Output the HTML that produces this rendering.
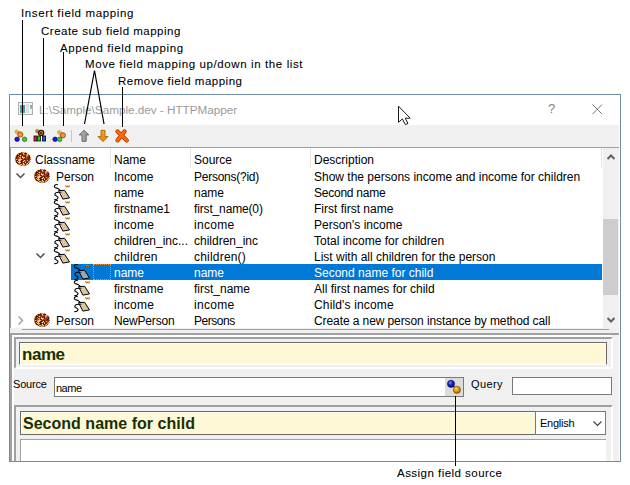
<!DOCTYPE html>
<html><head><meta charset="utf-8">
<style>
*{margin:0;padding:0;box-sizing:border-box}
html,body{width:630px;height:485px;overflow:hidden;background:#fff;font-family:"Liberation Sans",sans-serif;font-size:12px;color:#000;position:relative}
.a{position:absolute;white-space:nowrap}
.ann{position:absolute;white-space:nowrap;font-size:11.5px;line-height:14px;color:#000;letter-spacing:0.5px;-webkit-text-stroke:0.08px #000}
.t{position:absolute;white-space:nowrap;font-size:12px;line-height:16px}
.s{position:absolute;white-space:nowrap;font-size:11px;line-height:14px;letter-spacing:-0.5px}
.sep{position:absolute;top:148px;width:1px;height:20px;background:#e5e5e5}
svg{position:absolute;overflow:visible}
</style></head><body>
<svg width="0" height="0" style="left:0;top:0">
<defs>
  <pattern id="ck" width="4" height="4" patternUnits="userSpaceOnUse">
    <rect width="4" height="4" fill="#d08840"/>
    <rect x="0" y="0" width="2" height="2" fill="#7a2808"/>
    <rect x="2" y="2" width="1" height="1" fill="#f8d890"/>
    <rect x="3" y="0" width="1" height="1" fill="#b05818"/>
    <rect x="1" y="3" width="1" height="1" fill="#f0c070"/>
  </pattern>
  <clipPath id="ckc"><ellipse cx="8" cy="7" rx="7.9" ry="6.9"/></clipPath>
  <g id="cookie" clip-path="url(#ckc)"><rect x="4" y="0" width="1" height="1" fill="#d08030"/><rect x="5" y="0" width="1" height="1" fill="#eab060"/><rect x="6" y="0" width="1" height="1" fill="#581000"/><rect x="7" y="0" width="1" height="1" fill="#d08030"/><rect x="8" y="0" width="1" height="1" fill="#d08030"/><rect x="9" y="0" width="1" height="1" fill="#eab060"/><rect x="10" y="0" width="1" height="1" fill="#8a2c08"/><rect x="11" y="0" width="1" height="1" fill="#d08030"/><rect x="2" y="1" width="1" height="1" fill="#eab060"/><rect x="3" y="1" width="1" height="1" fill="#983a0c"/><rect x="4" y="1" width="1" height="1" fill="#701804"/><rect x="5" y="1" width="1" height="1" fill="#8a2c08"/><rect x="6" y="1" width="1" height="1" fill="#701804"/><rect x="7" y="1" width="1" height="1" fill="#983a0c"/><rect x="8" y="1" width="1" height="1" fill="#fbe0a8"/><rect x="9" y="1" width="1" height="1" fill="#701804"/><rect x="10" y="1" width="1" height="1" fill="#581000"/><rect x="11" y="1" width="1" height="1" fill="#581000"/><rect x="12" y="1" width="1" height="1" fill="#fbe0a8"/><rect x="13" y="1" width="1" height="1" fill="#eab060"/><rect x="1" y="2" width="1" height="1" fill="#701804"/><rect x="2" y="2" width="1" height="1" fill="#701804"/><rect x="3" y="2" width="1" height="1" fill="#d08030"/><rect x="4" y="2" width="1" height="1" fill="#701804"/><rect x="5" y="2" width="1" height="1" fill="#8a2c08"/><rect x="6" y="2" width="1" height="1" fill="#8a2c08"/><rect x="7" y="2" width="1" height="1" fill="#701804"/><rect x="8" y="2" width="1" height="1" fill="#d08030"/><rect x="9" y="2" width="1" height="1" fill="#d08030"/><rect x="10" y="2" width="1" height="1" fill="#983a0c"/><rect x="11" y="2" width="1" height="1" fill="#d08030"/><rect x="12" y="2" width="1" height="1" fill="#eab060"/><rect x="13" y="2" width="1" height="1" fill="#d08030"/><rect x="14" y="2" width="1" height="1" fill="#fbe0a8"/><rect x="0" y="3" width="1" height="1" fill="#d08030"/><rect x="1" y="3" width="1" height="1" fill="#8a2c08"/><rect x="2" y="3" width="1" height="1" fill="#581000"/><rect x="3" y="3" width="1" height="1" fill="#581000"/><rect x="4" y="3" width="1" height="1" fill="#983a0c"/><rect x="5" y="3" width="1" height="1" fill="#fbe0a8"/><rect x="6" y="3" width="1" height="1" fill="#b05014"/><rect x="7" y="3" width="1" height="1" fill="#8a2c08"/><rect x="8" y="3" width="1" height="1" fill="#8a2c08"/><rect x="9" y="3" width="1" height="1" fill="#701804"/><rect x="10" y="3" width="1" height="1" fill="#983a0c"/><rect x="11" y="3" width="1" height="1" fill="#b05014"/><rect x="12" y="3" width="1" height="1" fill="#983a0c"/><rect x="13" y="3" width="1" height="1" fill="#b05014"/><rect x="14" y="3" width="1" height="1" fill="#581000"/><rect x="15" y="3" width="1" height="1" fill="#983a0c"/><rect x="0" y="4" width="1" height="1" fill="#701804"/><rect x="1" y="4" width="1" height="1" fill="#8a2c08"/><rect x="2" y="4" width="1" height="1" fill="#581000"/><rect x="3" y="4" width="1" height="1" fill="#d08030"/><rect x="4" y="4" width="1" height="1" fill="#581000"/><rect x="5" y="4" width="1" height="1" fill="#b05014"/><rect x="6" y="4" width="1" height="1" fill="#701804"/><rect x="7" y="4" width="1" height="1" fill="#eab060"/><rect x="8" y="4" width="1" height="1" fill="#983a0c"/><rect x="9" y="4" width="1" height="1" fill="#8a2c08"/><rect x="10" y="4" width="1" height="1" fill="#701804"/><rect x="11" y="4" width="1" height="1" fill="#b05014"/><rect x="12" y="4" width="1" height="1" fill="#581000"/><rect x="13" y="4" width="1" height="1" fill="#983a0c"/><rect x="14" y="4" width="1" height="1" fill="#701804"/><rect x="15" y="4" width="1" height="1" fill="#8a2c08"/><rect x="0" y="5" width="1" height="1" fill="#701804"/><rect x="1" y="5" width="1" height="1" fill="#701804"/><rect x="2" y="5" width="1" height="1" fill="#983a0c"/><rect x="3" y="5" width="1" height="1" fill="#8a2c08"/><rect x="4" y="5" width="1" height="1" fill="#eab060"/><rect x="5" y="5" width="1" height="1" fill="#d08030"/><rect x="6" y="5" width="1" height="1" fill="#8a2c08"/><rect x="7" y="5" width="1" height="1" fill="#ffffff"/><rect x="8" y="5" width="1" height="1" fill="#701804"/><rect x="9" y="5" width="1" height="1" fill="#eab060"/><rect x="10" y="5" width="1" height="1" fill="#701804"/><rect x="11" y="5" width="1" height="1" fill="#b05014"/><rect x="12" y="5" width="1" height="1" fill="#8a2c08"/><rect x="13" y="5" width="1" height="1" fill="#8a2c08"/><rect x="14" y="5" width="1" height="1" fill="#581000"/><rect x="15" y="5" width="1" height="1" fill="#983a0c"/><rect x="0" y="6" width="1" height="1" fill="#8a2c08"/><rect x="1" y="6" width="1" height="1" fill="#581000"/><rect x="2" y="6" width="1" height="1" fill="#8a2c08"/><rect x="3" y="6" width="1" height="1" fill="#b05014"/><rect x="4" y="6" width="1" height="1" fill="#983a0c"/><rect x="5" y="6" width="1" height="1" fill="#eab060"/><rect x="6" y="6" width="1" height="1" fill="#701804"/><rect x="7" y="6" width="1" height="1" fill="#581000"/><rect x="8" y="6" width="1" height="1" fill="#8a2c08"/><rect x="9" y="6" width="1" height="1" fill="#8a2c08"/><rect x="10" y="6" width="1" height="1" fill="#983a0c"/><rect x="11" y="6" width="1" height="1" fill="#b05014"/><rect x="12" y="6" width="1" height="1" fill="#8a2c08"/><rect x="13" y="6" width="1" height="1" fill="#701804"/><rect x="14" y="6" width="1" height="1" fill="#701804"/><rect x="15" y="6" width="1" height="1" fill="#eab060"/><rect x="0" y="7" width="1" height="1" fill="#8a2c08"/><rect x="1" y="7" width="1" height="1" fill="#eab060"/><rect x="2" y="7" width="1" height="1" fill="#b05014"/><rect x="3" y="7" width="1" height="1" fill="#d08030"/><rect x="4" y="7" width="1" height="1" fill="#581000"/><rect x="5" y="7" width="1" height="1" fill="#d08030"/><rect x="6" y="7" width="1" height="1" fill="#eab060"/><rect x="7" y="7" width="1" height="1" fill="#983a0c"/><rect x="8" y="7" width="1" height="1" fill="#8a2c08"/><rect x="9" y="7" width="1" height="1" fill="#701804"/><rect x="10" y="7" width="1" height="1" fill="#581000"/><rect x="11" y="7" width="1" height="1" fill="#983a0c"/><rect x="12" y="7" width="1" height="1" fill="#8a2c08"/><rect x="13" y="7" width="1" height="1" fill="#8a2c08"/><rect x="14" y="7" width="1" height="1" fill="#983a0c"/><rect x="15" y="7" width="1" height="1" fill="#581000"/><rect x="0" y="8" width="1" height="1" fill="#8a2c08"/><rect x="1" y="8" width="1" height="1" fill="#581000"/><rect x="2" y="8" width="1" height="1" fill="#581000"/><rect x="3" y="8" width="1" height="1" fill="#eab060"/><rect x="4" y="8" width="1" height="1" fill="#b05014"/><rect x="5" y="8" width="1" height="1" fill="#701804"/><rect x="6" y="8" width="1" height="1" fill="#701804"/><rect x="7" y="8" width="1" height="1" fill="#581000"/><rect x="8" y="8" width="1" height="1" fill="#8a2c08"/><rect x="9" y="8" width="1" height="1" fill="#fbe0a8"/><rect x="10" y="8" width="1" height="1" fill="#8a2c08"/><rect x="11" y="8" width="1" height="1" fill="#983a0c"/><rect x="12" y="8" width="1" height="1" fill="#eab060"/><rect x="13" y="8" width="1" height="1" fill="#8a2c08"/><rect x="14" y="8" width="1" height="1" fill="#8a2c08"/><rect x="15" y="8" width="1" height="1" fill="#ffffff"/><rect x="0" y="9" width="1" height="1" fill="#701804"/><rect x="1" y="9" width="1" height="1" fill="#8a2c08"/><rect x="2" y="9" width="1" height="1" fill="#eab060"/><rect x="3" y="9" width="1" height="1" fill="#983a0c"/><rect x="4" y="9" width="1" height="1" fill="#eab060"/><rect x="5" y="9" width="1" height="1" fill="#8a2c08"/><rect x="6" y="9" width="1" height="1" fill="#581000"/><rect x="7" y="9" width="1" height="1" fill="#8a2c08"/><rect x="8" y="9" width="1" height="1" fill="#701804"/><rect x="9" y="9" width="1" height="1" fill="#8a2c08"/><rect x="10" y="9" width="1" height="1" fill="#d08030"/><rect x="11" y="9" width="1" height="1" fill="#701804"/><rect x="12" y="9" width="1" height="1" fill="#8a2c08"/><rect x="13" y="9" width="1" height="1" fill="#b05014"/><rect x="14" y="9" width="1" height="1" fill="#eab060"/><rect x="15" y="9" width="1" height="1" fill="#701804"/><rect x="0" y="10" width="1" height="1" fill="#b05014"/><rect x="1" y="10" width="1" height="1" fill="#581000"/><rect x="2" y="10" width="1" height="1" fill="#581000"/><rect x="3" y="10" width="1" height="1" fill="#fbe0a8"/><rect x="4" y="10" width="1" height="1" fill="#fbe0a8"/><rect x="5" y="10" width="1" height="1" fill="#eab060"/><rect x="6" y="10" width="1" height="1" fill="#701804"/><rect x="7" y="10" width="1" height="1" fill="#701804"/><rect x="8" y="10" width="1" height="1" fill="#701804"/><rect x="9" y="10" width="1" height="1" fill="#581000"/><rect x="10" y="10" width="1" height="1" fill="#fbe0a8"/><rect x="11" y="10" width="1" height="1" fill="#581000"/><rect x="12" y="10" width="1" height="1" fill="#701804"/><rect x="13" y="10" width="1" height="1" fill="#eab060"/><rect x="14" y="10" width="1" height="1" fill="#d08030"/><rect x="15" y="10" width="1" height="1" fill="#ffffff"/><rect x="1" y="11" width="1" height="1" fill="#b05014"/><rect x="2" y="11" width="1" height="1" fill="#581000"/><rect x="3" y="11" width="1" height="1" fill="#701804"/><rect x="4" y="11" width="1" height="1" fill="#d08030"/><rect x="5" y="11" width="1" height="1" fill="#983a0c"/><rect x="6" y="11" width="1" height="1" fill="#581000"/><rect x="7" y="11" width="1" height="1" fill="#983a0c"/><rect x="8" y="11" width="1" height="1" fill="#fbe0a8"/><rect x="9" y="11" width="1" height="1" fill="#983a0c"/><rect x="10" y="11" width="1" height="1" fill="#581000"/><rect x="11" y="11" width="1" height="1" fill="#b05014"/><rect x="12" y="11" width="1" height="1" fill="#fbe0a8"/><rect x="13" y="11" width="1" height="1" fill="#581000"/><rect x="14" y="11" width="1" height="1" fill="#983a0c"/><rect x="2" y="12" width="1" height="1" fill="#b05014"/><rect x="3" y="12" width="1" height="1" fill="#983a0c"/><rect x="4" y="12" width="1" height="1" fill="#983a0c"/><rect x="5" y="12" width="1" height="1" fill="#eab060"/><rect x="6" y="12" width="1" height="1" fill="#eab060"/><rect x="7" y="12" width="1" height="1" fill="#b05014"/><rect x="8" y="12" width="1" height="1" fill="#eab060"/><rect x="9" y="12" width="1" height="1" fill="#eab060"/><rect x="10" y="12" width="1" height="1" fill="#701804"/><rect x="11" y="12" width="1" height="1" fill="#eab060"/><rect x="12" y="12" width="1" height="1" fill="#581000"/><rect x="13" y="12" width="1" height="1" fill="#581000"/><rect x="4" y="13" width="1" height="1" fill="#ffffff"/><rect x="5" y="13" width="1" height="1" fill="#b05014"/><rect x="6" y="13" width="1" height="1" fill="#983a0c"/><rect x="7" y="13" width="1" height="1" fill="#eab060"/><rect x="8" y="13" width="1" height="1" fill="#d08030"/><rect x="9" y="13" width="1" height="1" fill="#983a0c"/><rect x="10" y="13" width="1" height="1" fill="#701804"/><rect x="11" y="13" width="1" height="1" fill="#983a0c"/><circle cx="5" cy="8" r="1" fill="#fff"/><circle cx="8.5" cy="6" r="0.7" fill="#fff"/><circle cx="8.5" cy="9.5" r="0.7" fill="#fff"/><circle cx="12" cy="4" r="0.7" fill="#fff"/></g>
  <g id="tag">
    <path d="M4.8 0.8C2.8 0.1 1 1.2 1.4 2.8C1.8 4.2 4.2 4 5.2 4.6L8.2 7.2" stroke="#000" stroke-width="1.1" fill="none"/>
    <path d="M8 8.4C5 8 2 8.4 1.8 10.3C1.7 12 5 11.8 5 13.5C5 15 3 15.6 1.2 15.8" stroke="#000" stroke-width="1.1" fill="none"/>
    <path d="M5.5 6.6L11.6 6.3L16.5 13.9L9.9 15.1Z" fill="#dcc49c" stroke="#000" stroke-width="1"/>
    <circle cx="7.8" cy="8.2" r="0.8" fill="#333"/>
    <path d="M12.6 1.6L13.6 3.2L14.6 2.2L15.6 3.2L16.4 1.6" stroke="#222" stroke-width="0.9" fill="none"/>
    <path d="M12.8 1.4L13.8 2.6L14.6 1.6L15.6 2.6L16.4 1.4" stroke="#ff8a00" stroke-width="1" fill="none"/>
  </g>
  <g id="tagsel">
    <path d="M4.8 0.8C2.8 0.1 1 1.2 1.4 2.8C1.8 4.2 4.2 4 5.2 4.6L8.2 7.2" stroke="#000" stroke-width="1.1" fill="none"/>
    <path d="M8 8.4C5 8 2 8.4 1.8 10.3C1.7 12 5 11.8 5 13.5C5 15 3 15.6 1.2 15.8" stroke="#000" stroke-width="1.1" fill="none"/>
    <path d="M5.5 6.6L11.6 6.3L16.5 13.9L9.9 15.1Z" fill="#9ca8b0" stroke="#000" stroke-width="1"/>
    <circle cx="7.8" cy="8.2" r="0.8" fill="#333"/>
    <path d="M12.6 1.6L13.6 3.2L14.6 2.2L15.6 3.2L16.4 1.6" stroke="#222" stroke-width="0.9" fill="none"/>
    <path d="M12.8 1.4L13.8 2.6L14.6 1.6L15.6 2.6L16.4 1.4" stroke="#ff8a00" stroke-width="1" fill="none"/>
  </g>
</defs>
</svg>

<!-- annotations -->
<div class="ann" style="left:21px;top:6px;letter-spacing:0.63px">Insert field mapping</div>
<div class="ann" style="left:41px;top:24px">Create sub field mapping</div>
<div class="ann" style="left:60px;top:41px;letter-spacing:0.63px">Append field mapping</div>
<div class="ann" style="left:85px;top:57px;letter-spacing:0.61px">Move field mapping up/down in the list</div>
<div class="ann" style="left:118px;top:74px;letter-spacing:0.5px">Remove field mapping</div>

<!-- window frame -->
<div class="a" style="left:9px;top:94px;width:612px;height:368px;border:1px solid #6f8ba6;background:#fff"></div>
<!-- title bar -->
<div class="a" style="left:10px;top:95px;width:610px;height:30px;background:#fff"></div>
<div class="a" style="left:18px;top:102px;width:15px;height:13px;border:1px solid #b0b0b0;background:#f4f4f4"></div>
<div class="a" style="left:20px;top:105px;width:5px;height:8px;background:linear-gradient(#5a8ab8,#48a870)"></div>
<div class="a" style="left:26px;top:104px;width:3px;height:9px;background:#e0e0e0"></div>
<div class="a" style="left:30px;top:105px;width:2px;height:4px;background:linear-gradient(#78a8d0,#90c890)"></div>
<div class="t" style="left:39px;top:102px;font-size:11.7px;color:#9a9a9a">L:\Sample\Sample.dev - HTTPMapper</div>
<div class="t" style="left:548px;top:101px;font-size:13px;color:#808080">?</div>
<svg style="left:590px;top:102px" width="14" height="14"><path d="M2.5 2.5L12 12M12 2.5L2.5 12" stroke="#777" stroke-width="1"/></svg>

<!-- toolbar -->
<div class="a" style="left:10px;top:125px;width:609px;height:22px;background:#f0f0f0"></div>
<div class="a" style="left:71px;top:130px;width:1px;height:12px;background:#c8c8c8"></div>
<svg style="left:0;top:0" width="630" height="485">
  <defs>
    <linearGradient id="gup" x1="0" y1="0" x2="1" y2="0"><stop offset="0" stop-color="#c8c8c8"/><stop offset="0.5" stop-color="#a0a0a0"/><stop offset="1" stop-color="#909090"/></linearGradient>
    <linearGradient id="gdn" x1="0" y1="0" x2="0" y2="1"><stop offset="0" stop-color="#f8a040"/><stop offset="1" stop-color="#e08a00"/></linearGradient>
  </defs>
  <!-- insert -->
  <line x1="16.6" y1="131.6" x2="20.2" y2="134.5" stroke="#e89838" stroke-width="4.2" stroke-linecap="round" opacity="0.8"/>
  <circle cx="20.3" cy="134.5" r="2.6" fill="#f09828" stroke="#8a4a10" stroke-width="0.8"/>
  <circle cx="17.1" cy="139.3" r="2.3" fill="#1a1ad8" stroke="#000070" stroke-width="0.6"/>
  <circle cx="24.6" cy="139.3" r="2.3" fill="#48c838" stroke="#105010" stroke-width="0.6"/>
  <!-- create sub -->
  <line x1="37.3" y1="131.2" x2="41" y2="133" stroke="#a86020" stroke-width="4" stroke-linecap="round" opacity="0.8"/>
  <circle cx="41.2" cy="132.9" r="2.6" fill="#d07818" stroke="#201000" stroke-width="1.1"/><path d="M39.5 131.5L42.5 134.5M40 134L42 132" stroke="#301000" stroke-width="0.7"/>
  <rect x="34" y="136" width="2.8" height="5" fill="#d02838" stroke="#200" stroke-width="0.8"/>
  <rect x="37.6" y="136" width="3" height="5" fill="#30b838" stroke="#020" stroke-width="0.8"/>
  <rect x="42.4" y="136" width="3.2" height="5" fill="#3858c8" stroke="#002" stroke-width="0.8"/>
  <!-- append -->
  <line x1="59.2" y1="132.3" x2="62.8" y2="135.2" stroke="#e89838" stroke-width="4.2" stroke-linecap="round" opacity="0.8"/>
  <circle cx="62.9" cy="135.3" r="2.6" fill="#f09828" stroke="#8a4a10" stroke-width="0.8"/>
  <circle cx="55.1" cy="139.3" r="2.3" fill="#1a1ad8" stroke="#000070" stroke-width="0.6"/>
  <circle cx="59.7" cy="139.3" r="2.3" fill="#48c838" stroke="#105010" stroke-width="0.6"/>
  <!-- up -->
  <path d="M84 130.3L88.8 134.9H86.2V141.3H82V134.9H79.2Z" fill="url(#gup)" stroke="#606060" stroke-width="0.9"/>
  <!-- down -->
  <path d="M101 130.4H105V136.6H108L103 141.6L98 136.6H101Z" fill="url(#gdn)" stroke="#a86000" stroke-width="0.9"/>
  <!-- remove -->
  <path d="M117.5 131.5L126.8 140.4M124.5 131.5L117.5 140.4" stroke="#a83000" stroke-width="4.2" stroke-linecap="round"/>
  <path d="M117.5 131.5L126.8 140.4M124.5 131.5L117.5 140.4" stroke="#ff6a00" stroke-width="2.8" stroke-linecap="round"/>
</svg>

<!-- list -->
<div class="a" style="left:10px;top:147px;width:609px;height:182px;background:#fff;border-top:1px solid #a0a0a0;border-left:1px solid #a0a0a0"></div>
<!-- scrollbar -->
<div class="a" style="left:603px;top:148px;width:16px;height:180px;background:#f0f0f0"></div>
<div class="a" style="left:603px;top:219px;width:15px;height:76px;background:#cdcdcd"></div>
<svg style="left:603px;top:150px" width="16" height="14"><path d="M4.5 9L8 5.5L11.5 9" stroke="#606060" stroke-width="2" fill="none"/></svg>
<svg style="left:603px;top:313px" width="16" height="14"><path d="M4.5 5L8 8.5L11.5 5" stroke="#606060" stroke-width="2" fill="none"/></svg>

<!-- header -->
<div class="sep" style="left:110px"></div>
<div class="sep" style="left:190px"></div>
<div class="sep" style="left:310px"></div>
<div class="sep" style="left:601px"></div>
<svg style="left:15px;top:151.5px" width="16" height="14"><use href="#cookie"/></svg>
<div class="t" style="left:35px;top:152px">Classname</div>
<div class="t" style="left:114px;top:152px">Name</div>
<div class="t" style="left:194px;top:152px">Source</div>
<div class="t" style="left:314px;top:152px">Description</div>

<!-- selected row -->
<div class="a" style="left:71px;top:264px;width:531px;height:16px;background:#0078d7"></div>
<div class="a" style="left:93px;top:264px;width:18px;height:16px;border:1px dotted #f89038"></div>

<!-- tree glyphs -->
<svg style="left:0;top:0" width="630" height="485">
  <path d="M16.5 173.5L20.5 177.5L24.5 173.5" stroke="#505050" stroke-width="1.5" fill="none"/>
  <path d="M36.5 253.5L40.5 257.5L44.5 253.5" stroke="#505050" stroke-width="1.5" fill="none"/>
  <path d="M18.5 316.5L22.5 320.5L18.5 324.5" stroke="#a0a0a0" stroke-width="1.5" fill="none"/>
</svg>
<svg style="left:34px;top:169px" width="16" height="14"><use href="#cookie"/></svg>
<svg style="left:34px;top:313px" width="16" height="14"><use href="#cookie"/></svg>
<svg style="left:53px;top:184px" width="17" height="16"><use href="#tag"/></svg>
<svg style="left:53px;top:200px" width="17" height="16"><use href="#tag"/></svg>
<svg style="left:53px;top:216px" width="17" height="16"><use href="#tag"/></svg>
<svg style="left:53px;top:232px" width="17" height="16"><use href="#tag"/></svg>
<svg style="left:53px;top:248px" width="17" height="16"><use href="#tag"/></svg>
<svg style="left:73px;top:264px" width="17" height="16"><use href="#tagsel"/></svg>
<svg style="left:73px;top:280px" width="17" height="16"><use href="#tag"/></svg>
<svg style="left:73px;top:296px" width="17" height="16"><use href="#tag"/></svg>

<!-- rows -->
<div class="t" style="left:56px;top:169px">Person</div>
<div class="t" style="left:114px;top:169px">Income</div>
<div class="t" style="left:194px;top:169px;letter-spacing:-0.25px">Persons(?id)</div>
<div class="t" style="left:314px;top:169px">Show the persons income and income for children</div>

<div class="t" style="left:114px;top:185px">name</div>
<div class="t" style="left:194px;top:185px">name</div>
<div class="t" style="left:314px;top:185px;letter-spacing:-0.24px">Second name</div>

<div class="t" style="left:114px;top:201px">firstname1</div>
<div class="t" style="left:194px;top:201px;letter-spacing:-0.15px">first_name(0)</div>
<div class="t" style="left:314px;top:201px">First first name</div>

<div class="t" style="left:114px;top:217px;letter-spacing:0.25px">income</div>
<div class="t" style="left:194px;top:217px;letter-spacing:0.3px">income</div>
<div class="t" style="left:314px;top:217px">Person's income</div>

<div class="t" style="left:114px;top:233px">children_inc...</div>
<div class="t" style="left:194px;top:233px">children_inc</div>
<div class="t" style="left:314px;top:233px">Total income for children</div>

<div class="t" style="left:114px;top:249px;letter-spacing:0.2px">children</div>
<div class="t" style="left:194px;top:249px;letter-spacing:0.2px">children()</div>
<div class="t" style="left:314px;top:249px">List with all children for the person</div>

<div class="t" style="left:114px;top:265px;color:#fff">name</div>
<div class="t" style="left:194px;top:265px;color:#fff">name</div>
<div class="t" style="left:314px;top:265px;color:#fff">Second name for child</div>

<div class="t" style="left:114px;top:281px">firstname</div>
<div class="t" style="left:194px;top:281px">first_name</div>
<div class="t" style="left:314px;top:281px">All first names for child</div>

<div class="t" style="left:114px;top:297px;letter-spacing:0.25px">income</div>
<div class="t" style="left:194px;top:297px;letter-spacing:0.3px">income</div>
<div class="t" style="left:314px;top:297px;letter-spacing:0.15px">Child's income</div>

<div class="t" style="left:56px;top:313px">Person</div>
<div class="t" style="left:114px;top:313px;letter-spacing:-0.17px">NewPerson</div>
<div class="t" style="left:194px;top:313px;letter-spacing:-0.45px">Persons</div>
<div class="t" style="left:314px;top:313px;letter-spacing:-0.09px">Create a new person instance by method call</div>

<!-- bottom area -->
<div class="a" style="left:10px;top:328px;width:609px;height:133px;background:#f0f0f0"></div>
<div class="a" style="left:22px;top:329px;width:587px;height:1px;background:#a0a0a0"></div>
<div class="a" style="left:10px;top:333px;width:609px;height:2px;background:#a0a0a0"></div>
<div class="a" style="left:10px;top:333px;width:2px;height:128px;background:#a0a0a0"></div>
<div class="a" style="left:12px;top:335px;width:600px;height:2px;background:#fff"></div>
<div class="a" style="left:12px;top:335px;width:2px;height:126px;background:#fff"></div>

<!-- panel1 -->
<div class="a" style="left:14px;top:337px;width:599px;height:32px;border-top:2px solid #a0a0a0;border-left:2px solid #a0a0a0;border-right:2px solid #fff;border-bottom:2px solid #fff"></div>
<div class="a" style="left:19px;top:342px;width:588px;height:23px;border:1px solid #6a6a6a;border-bottom-color:#fff;background:#fff8d7;box-shadow:inset 1px 1px 0 #fff"></div>
<div class="a" style="left:22px;top:343px;font-size:17px;font-weight:bold;line-height:24px;color:#183004;letter-spacing:-0.45px">name</div>

<!-- source row -->
<div class="s" style="left:13px;top:377px;letter-spacing:-0.2px">Source</div>
<div class="a" style="left:54px;top:377px;width:410px;height:20px;border:1px solid #7a7a7a;background:#fff"></div>
<div class="s" style="left:56px;top:381px">name</div>
<div class="a" style="left:445px;top:378px;width:18px;height:18px;background:#dcdcdc"></div>
<svg style="left:445px;top:378px" width="18" height="18">
  <line x1="6" y1="5.8" x2="12" y2="11.8" stroke="#222" stroke-width="1.2"/>
  <defs><radialGradient id="bb" cx="0.4" cy="0.35" r="0.6"><stop offset="0" stop-color="#8090f0"/><stop offset="0.5" stop-color="#1a22d8"/><stop offset="1" stop-color="#0a0a90"/></radialGradient>
  <radialGradient id="ob" cx="0.4" cy="0.35" r="0.6"><stop offset="0" stop-color="#ffd070"/><stop offset="0.5" stop-color="#f0a018"/><stop offset="1" stop-color="#b06800"/></radialGradient></defs>
  <circle cx="6" cy="5.8" r="3.6" fill="url(#bb)" stroke="#101050" stroke-width="0.6"/>
  <circle cx="11.9" cy="11.8" r="3.6" fill="url(#ob)" stroke="#604000" stroke-width="0.6"/>
</svg>
<div class="s" style="left:471px;top:377px;letter-spacing:0.4px">Query</div>
<div class="a" style="left:512px;top:377px;width:100px;height:18px;border:1px solid #7a7a7a;background:#fff"></div>

<!-- panel2 -->
<div class="a" style="left:14px;top:405px;width:599px;height:56px;border-top:2px solid #a0a0a0;border-left:2px solid #a0a0a0;border-right:2px solid #fff"></div>
<div class="a" style="left:20px;top:411px;width:516px;height:24px;border:1px solid #6a6a6a;background:#fff8d7;box-shadow:inset 1px 1px 0 #fff"></div>
<div class="a" style="left:23px;top:412px;font-size:16px;font-weight:bold;line-height:23px;color:#183004;letter-spacing:0.02px">Second name for child</div>
<div class="a" style="left:535px;top:411px;width:71px;height:24px;border:1px solid #7a7a7a;background:#fff"></div>
<div class="s" style="left:540px;top:416px;letter-spacing:-0.25px">English</div>
<svg style="left:0;top:0" width="630" height="485"><path d="M593.5 421.5L597.5 425.5L601.5 421.5" stroke="#404040" stroke-width="1.1" fill="none"/></svg>
<div class="a" style="left:20px;top:439px;width:586px;height:22px;border-top:1px solid #a0a0a0;border-left:1px solid #a0a0a0;background:#fff"></div>

<!-- annotation lines -->
<div class="a" style="left:22px;top:20px;width:1px;height:106px;background:#000"></div>
<div class="a" style="left:43px;top:38px;width:1px;height:88px;background:#000"></div>
<div class="a" style="left:63px;top:52px;width:1px;height:74px;background:#000"></div>
<svg style="left:0;top:0" width="630" height="485"><path d="M94.5 70.5L84.5 124M94.5 70.5L104 124" stroke="#000" stroke-width="1.2" fill="none"/></svg>
<div class="a" style="left:122px;top:87px;width:1px;height:40px;background:#000"></div>
<div class="a" style="left:455px;top:396px;width:1px;height:70px;background:#000"></div>
<div class="ann" style="left:397px;top:466px;letter-spacing:0.47px">Assign field source</div>

<svg style="left:0;top:0" width="630" height="485"><path d="M398.5 106.2V122.3L402.4 118.9L405.4 124.6L408 123.4L405.2 118.2H410.2Z" fill="#fff" stroke="#1a1a1a" stroke-width="1" stroke-linejoin="round"/></svg>
</body></html>
